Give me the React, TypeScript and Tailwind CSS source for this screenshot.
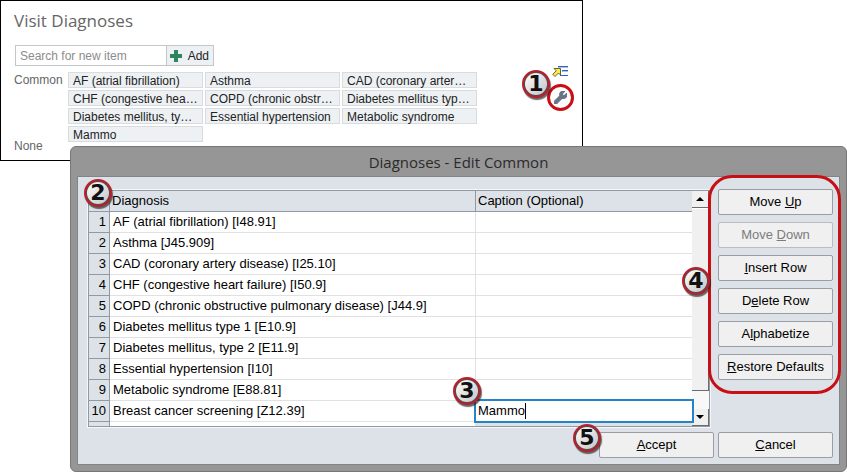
import { useState } from "react";
import type { ReactNode } from "react";
import { FaWrench } from "react-icons/fa";

const common = [
  "AF (atrial fibrillation)",
  "Asthma",
  "CAD (coronary arter…",
  "CHF (congestive hea…",
  "COPD (chronic obstr…",
  "Diabetes mellitus typ…",
  "Diabetes mellitus, ty…",
  "Essential hypertension",
  "Metabolic syndrome",
  "Mammo",
];

const rows = [
  "AF (atrial fibrillation) [I48.91]",
  "Asthma [J45.909]",
  "CAD (coronary artery disease) [I25.10]",
  "CHF (congestive heart failure) [I50.9]",
  "COPD (chronic obstructive pulmonary disease) [J44.9]",
  "Diabetes mellitus type 1 [E10.9]",
  "Diabetes mellitus, type 2 [E11.9]",
  "Essential hypertension [I10]",
  "Metabolic syndrome [E88.81]",
  "Breast cancer screening [Z12.39]",
];

function Badge({ n, className }: { n: number; className: string }) {
  return (
    <span
      className={`absolute z-20 flex size-7 items-center justify-center rounded-full border-2 border-[#b8202c] bg-[#5c4a4c] p-px shadow-[1px_2px_1px_rgba(40,40,40,0.7)] ${className}`}
    >
      <span className="flex size-full items-center justify-center rounded-full bg-linear-to-br from-white to-[#c4c4c8] font-['DejaVu_Sans',sans-serif] text-[22px] leading-none font-bold text-[#111]">
        {n}
      </span>
    </span>
  );
}

function DialogButton({ children, disabled = false }: { children: ReactNode; disabled?: boolean }) {
  return (
    <button
      type="button"
      disabled={disabled}
      className="h-[26px] w-[115px] rounded-xs border border-[#9a9ea2] bg-[#f0f0f0] text-[13px] leading-4 whitespace-nowrap text-black disabled:border-[#b9bdc0] disabled:text-[#7c7c7c]"
    >
      {children}
    </button>
  );
}

function ScrollBar() {
  return (
    <div className="flex w-[18px] shrink-0 flex-col border-r border-[#8f9ba0] bg-[#f4f4f4]">
      <button
        type="button"
        aria-label="Scroll up"
        className="flex h-[17px] items-center justify-center border-r border-b border-[#6c6c6c] bg-[#f0f0f0]"
      >
        <svg width="8" height="4" viewBox="0 0 8 4" aria-hidden="true">
          <path d="M0 4 4 0 8 4Z" />
        </svg>
      </button>
      <div className="flex-1 border-t border-r border-b border-t-white border-r-[#6c6c6c] border-b-[#6c6c6c] bg-[#f0f0f0]" />
      <div className="h-[18px] bg-[#f8f8f8]" />
      <button
        type="button"
        aria-label="Scroll down"
        className="flex h-[17px] items-center justify-center border-r border-b border-[#6c6c6c] bg-[#f0f0f0]"
      >
        <svg width="8" height="4" viewBox="0 0 8 4" aria-hidden="true">
          <path d="M0 0 4 4 8 0Z" />
        </svg>
      </button>
    </div>
  );
}

function VisitPanel() {
  return (
    <section className="relative flex h-[161px] max-w-[583px] flex-col border border-black bg-white pt-2 pl-[13px] text-xs text-[#666]">
      <h1 className="font-['Open_Sans',sans-serif] text-[17px] leading-6 font-normal text-[#666]">
        Visit Diagnoses
      </h1>
      <div className="mt-3 ml-px flex h-[21px]">
        <input
          type="text"
          aria-label="Search for new item"
          placeholder="Search for new item"
          className="w-[152px] border border-[#c3c7ca] bg-white px-1 text-xs placeholder:text-[#8c8c8c]"
        />
        <button
          type="button"
          className="-ml-px flex w-12 items-center justify-between border border-[#c3c7ca] bg-[#edf1f4] pr-1 pl-[3px] text-[#222]"
        >
          <svg width="12" height="12" viewBox="0 0 12 12" aria-hidden="true">
            <path d="M4 0h4v4h4v4H8v4H4V8H0V4h4Z" fill="#2e8560" />
          </svg>
          Add
        </button>
      </div>
      <div className="mt-1.5 flex">
        <div className="w-[54px] shrink-0 leading-4">Common</div>
        <ul className="grid grid-cols-[repeat(3,135px)] gap-x-0.5 gap-y-0.5">
          {common.map((name) => (
            <li key={name}>
              <button
                type="button"
                className="block h-4 w-full border border-[#d8dcdf] bg-[#edf1f4] px-1 text-left leading-4 whitespace-nowrap text-[#222]"
              >
                {name}
              </button>
            </li>
          ))}
        </ul>
      </div>
      <div className="-mt-1 leading-4">None</div>
      <div className="absolute top-[63px] right-2 flex flex-col items-center gap-1.5">
        <button type="button" aria-label="Show list" className="block">
          <svg width="17" height="14" viewBox="0 0 17 14" aria-hidden="true">
            <path d="M6 2.500h10M10 6.500h6M8 11.500h8" stroke="#2f62c4" strokeWidth="1" />
            <path d="M6 3.500h10M10 7.500h6" stroke="#a9c2ee" strokeWidth="1" />
            <path
              d="M2 4.500h6.500V11L6.500 9 3 12.500.800 10.300 4.300 6.800Z"
              fill="#ffee4a"
              stroke="#55502a"
              strokeWidth="0.900"
            />
          </svg>
        </button>
        <button
          type="button"
          aria-label="Edit common diagnoses"
          className="flex size-[27px] items-center justify-center rounded-full border-3 border-[#c70f14] text-[#667685]"
        >
          <FaWrench size={13} stroke="currentColor" strokeWidth={44} />
        </button>
        <Badge n={1} className="top-[6px] right-6" />
      </div>
    </section>
  );
}

function DiagnosisTable({ caption, onCaption }: { caption: string; onCaption: (v: string) => void }) {
  return (
    <table className="w-full min-w-0 flex-1 table-fixed border-separate border-spacing-0 bg-white text-[13px] leading-5">
      <colgroup>
        <col className="w-[21px]" />
        <col />
        <col className="w-[216px]" />
      </colgroup>
      <thead>
        <tr className="h-[21px] bg-[#dce2e8] text-left">
          <th aria-label="Row" className="relative border-r border-b border-[#8f9ba0] p-0">
            <Badge n={2} className="-top-3 -left-[5px]" />
          </th>
          <th className="border-r border-b border-[#8f9ba0] p-0 pl-0.5 font-normal">Diagnosis</th>
          <th className="border-b border-[#8f9ba0] p-0 pl-0.5 font-normal">Caption (Optional)</th>
        </tr>
      </thead>
      <tbody>
        {rows.map((name, i) => (
          <tr key={name} className="h-[21px]">
            <td className="border-r border-b border-[#8f9ba0] bg-[#dce2e8] p-0 pr-[3px] text-right">
              {i + 1}
            </td>
            <td className="truncate border-r border-b border-[#dfe1e3] p-0 pl-[3px]">{name}</td>
            <td className="relative border-b border-[#dfe1e3] p-0">
              {i === 9 && (
                <>
                  <input
                    type="text"
                    aria-label="Caption for row 10"
                    value={caption}
                    onChange={(e) => onCaption(e.target.value)}
                    className="block h-5 w-full bg-white pl-0.5 outline-2 outline-[#2484c8]"
                  />
                  <span className="absolute top-0.5 left-[49px] h-4 w-px bg-black" />
                  <Badge n={3} className="-top-6 -left-[23px]" />
                </>
              )}
            </td>
          </tr>
        ))}
        <tr className="h-1">
          <td className="border-r border-[#8f9ba0] bg-[#dce2e8] p-0" />
          <td className="border-r border-[#dfe1e3] p-0" />
          <td className="bg-[#dce2e8] p-0" />
        </tr>
      </tbody>
    </table>
  );
}

function EditDialog() {
  const [caption, setCaption] = useState("Mammo");
  return (
    <section
      role="dialog"
      aria-labelledby="dialog-title"
      className="relative -mt-[15px] ml-[70px] rounded-md border border-[#777] bg-[#969696] px-1.5 pb-1.5"
    >
      <h2
        id="dialog-title"
        className="h-[29px] text-center font-['Open_Sans',sans-serif] text-[15px] leading-[30px] font-normal text-[#2b2b2b]"
      >
        Diagnoses - Edit Common
      </h2>
      <div className="border border-[#7f8589] bg-[#dce2e8] pt-3 pr-1.5 pb-1.5 pl-2.5">
        <div className="flex items-start gap-2">
          <div className="mt-px flex min-w-0 flex-1 border-y border-l border-[#8f9ba0] shadow-[0_0_0_1px_#f5f7f9]">
            <DiagnosisTable caption={caption} onCaption={setCaption} />
            <ScrollBar />
          </div>
          <div className="relative flex flex-col gap-[7px]">
            <DialogButton>Move <u>U</u>p</DialogButton>
            <DialogButton disabled>Move <u>D</u>own</DialogButton>
            <DialogButton><u>I</u>nsert Row</DialogButton>
            <DialogButton>D<u>e</u>lete Row</DialogButton>
            <DialogButton>A<u>l</u>phabetize</DialogButton>
            <DialogButton><u>R</u>estore Defaults</DialogButton>
            <div className="pointer-events-none absolute -top-3.5 -right-2 -bottom-3.5 -left-2.5 rounded-3xl border-3 border-[#c70f14]" />
            <Badge n={4} className="top-[78px] -left-9" />
          </div>
        </div>
        <div className="mt-[5px] flex justify-end gap-1">
          <div className="relative flex">
            <DialogButton><u>A</u>ccept</DialogButton>
            <Badge n={5} className="-top-2 -left-[26px]" />
          </div>
          <DialogButton><u>C</u>ancel</DialogButton>
        </div>
      </div>
    </section>
  );
}

export default function App() {
  return (
    <main className="bg-white font-['Liberation_Sans',Arial,sans-serif] text-black">
      <VisitPanel />
      <EditDialog />
    </main>
  );
}
